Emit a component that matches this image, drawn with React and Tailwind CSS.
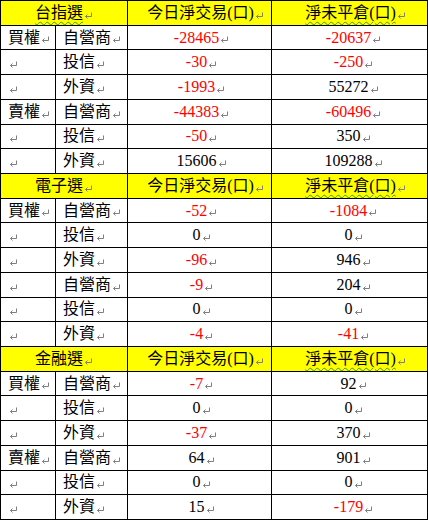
const sections = [
  {
    name: '台指選',
    wavyName: true,
    rows: [
      ['買權', '自營商', '-28465', '-20637'],
      ['', '投信', '-30', '-250'],
      ['', '外資', '-1993', '55272'],
      ['賣權', '自營商', '-44383', '-60496'],
      ['', '投信', '-50', '350'],
      ['', '外資', '15606', '109288'],
    ],
  },
  {
    name: '電子選',
    rows: [
      ['買權', '自營商', '-52', '-1084'],
      ['', '投信', '0', '0'],
      ['', '外資', '-96', '946'],
      ['', '自營商', '-9', '204'],
      ['', '投信', '0', '0'],
      ['', '外資', '-4', '-41'],
    ],
  },
  {
    name: '金融選',
    rows: [
      ['買權', '自營商', '-7', '92'],
      ['', '投信', '0', '0'],
      ['', '外資', '-37', '370'],
      ['賣權', '自營商', '64', '901'],
      ['', '投信', '0', '0'],
      ['', '外資', '15', '-179'],
    ],
  },
];

// Word's paragraph mark
function Mark() {
  return (
    <svg width="9" height="8" viewBox="0 0 9 8" className="ml-px shrink-0 self-end mb-[5px]">
      <path d="M7.5 0.5 V4.5 H1.5" fill="none" stroke="#7f7f7f" strokeWidth="1" />
      <path d="M3.5 2.5 L1.5 4.5 L3.5 6.5" fill="none" stroke="#7f7f7f" strokeWidth="1" />
    </svg>
  );
}

const cell = 'flex items-center border-r border-b border-black text-[16px] leading-none';

function Num({ value, className }) {
  const red = value.startsWith('-');
  return (
    <div className={`${cell} justify-center ${className}`}>
      <span className={red ? 'text-[#ff0000]' : 'text-black'}>{value}</span>
      <Mark />
    </div>
  );
}

export default function App() {
  return (
    <div className="w-[428px] h-[520px] bg-white">
      <div
        className="grid grid-cols-[55px_72px_144px_156px] grid-rows-[repeat(21,minmax(0,1fr))] w-[428px] h-[520px] border-t border-l border-black text-black"
        style={{ fontFamily: "'Liberation Serif', 'Noto Sans CJK TC', serif" }}
      >
        {sections.map((s) => [
          <div key={s.name + 'h'} className={`${cell} col-span-2 justify-center bg-[#ffff00]`}>
            <span className={s.wavyName ? 'underline decoration-wavy decoration-[#3a9a1a] decoration-1 underline-offset-[3px]' : ''}>
              {s.name}
            </span>
            <Mark />
          </div>,
          <div key={s.name + 'h3'} className={`${cell} justify-center bg-[#ffff00] pl-3`}>
            <span>今日淨交易(口)</span>
            <Mark />
          </div>,
          <div key={s.name + 'h4'} className={`${cell} justify-center bg-[#ffff00] pl-3`}>
            <span className="underline decoration-wavy decoration-[#3a9a1a] decoration-1 underline-offset-[3px]">淨未平倉(口)</span>
            <Mark />
          </div>,
          ...s.rows.map((r, i) => [
            <div key={s.name + i + 'a'} className={`${cell} pl-[7px]`}>
              {r[0] && <span>{r[0]}</span>}
              <Mark />
            </div>,
            <div key={s.name + i + 'b'} className={`${cell} pl-[7px]`}>
              <span>{r[1]}</span>
              <Mark />
            </div>,
            <Num key={s.name + i + 'c'} value={r[2]} className="pl-1" />,
            <Num key={s.name + i + 'd'} value={r[3]} className="pl-2" />,
          ]),
        ])}
      </div>
    </div>
  );
}
